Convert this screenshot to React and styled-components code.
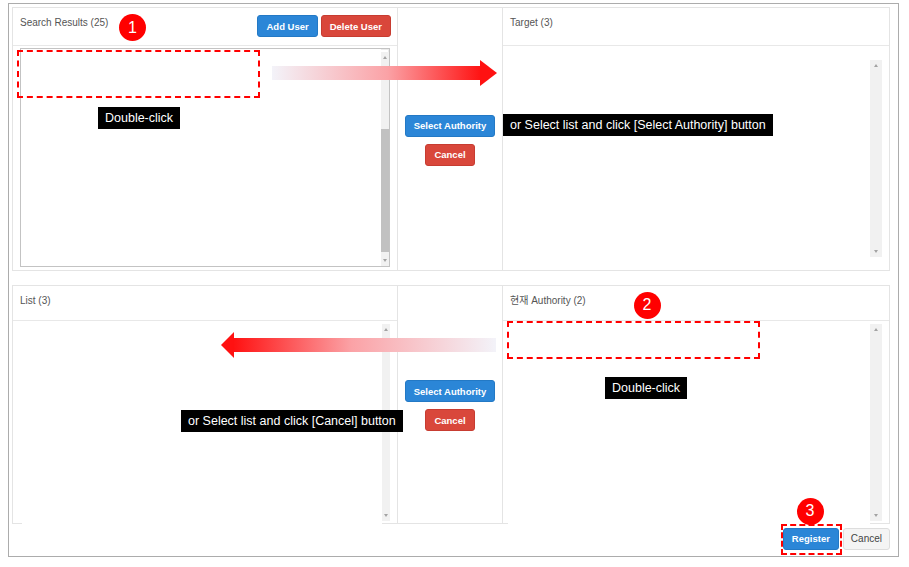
import React from 'react'
import styled, { createGlobalStyle } from 'styled-components'

const GlobalStyle = createGlobalStyle`
    html, body {
        margin: 0;
        padding: 0;
        background: #ffffff;
    }
    body {
        font-family: "Liberation Sans", "Noto Sans CJK KR", Arial, sans-serif;
    }
    * {
        box-sizing: border-box;
    }
`

const Page = styled.div`
    position: relative;
    width: 909px;
    height: 567px;
    overflow: hidden;
`

const Frame = styled.div`
    margin: 3px 0 0 8px;
    width: 891px;
    height: 554px;
    border: 1px solid #acacac;
    padding: 3px 8px 0 3px;
    display: flex;
    flex-direction: column;
`

const Section = styled.div`
    height: ${(props) => props.$height}px;
    margin-top: ${(props) => props.$top || 0}px;
    border: 1px solid #e4e4e4;
    display: grid;
    grid-template-columns: 385px 105px 1fr;
`

const Panel = styled.div`
    display: flex;
    flex-direction: column;
    min-height: 0;
    border-right: ${(props) => (props.$divider ? '1px solid #e4e4e4' : '0')};
`

const PanelHeader = styled.div`
    height: ${(props) => props.$height}px;
    flex-shrink: 0;
    border-bottom: 1px solid #e8e8e8;
    padding: 7px 6px 0 7px;
    display: flex;
    align-items: flex-start;
    justify-content: space-between;
`

const Title = styled.span`
    font-size: 10px;
    line-height: 14px;
    color: #555555;
    margin-top: 1px;
`

const ButtonRow = styled.div`
    display: flex;
    gap: 3px;
`

const COLORS = {
    primary: { bg: '#2b86d7', border: '#2379c5', text: '#ffffff' },
    danger: { bg: '#d9473b', border: '#c73c31', text: '#ffffff' },
    plain: { bg: '#f4f4f4', border: '#dddddd', text: '#444444' },
}

const Button = styled.button`
    height: 22px;
    padding: 0 ${(props) => (props.$variant === 'plain' ? 7 : 8)}px;
    border-radius: 3px;
    border: 1px solid ${(props) => COLORS[props.$variant].border};
    background: ${(props) => COLORS[props.$variant].bg};
    color: ${(props) => COLORS[props.$variant].text};
    font-family: "Liberation Sans", Arial, sans-serif;
    font-size: ${(props) => (props.$variant === 'plain' ? '10px' : '9.5px')};
    font-weight: ${(props) => (props.$variant === 'plain' ? 400 : 700)};
    white-space: nowrap;
    cursor: pointer;
    display: flex;
    align-items: center;
    justify-content: center;
`

const Middle = styled.div`
    display: flex;
    flex-direction: column;
    align-items: center;
    justify-content: center;
    gap: 7px;
    border-right: 1px solid #e4e4e4;
    padding-top: ${(props) => props.$shift || 0}px;
`

const BoxWrap = styled.div`
    flex: 1;
    min-height: 0;
    padding: 2px 7px 3px 7px;
    display: flex;
`

const ListBox = styled.div`
    flex: 1;
    display: flex;
    border: 1px solid #c3c3c3;
    box-shadow: inset 0 0 0 1px #ececec;
`

const ListArea = styled.div`
    flex: 1;
    min-height: 0;
    display: flex;
    padding: ${(props) => props.$pad};
`

const ListBody = styled.div`
    flex: 1;
    background: #ffffff;
    position: relative;
    z-index: 1;
    margin-bottom: ${(props) => props.$cover || 0}px;
`

const ScrollTrack = styled.div`
    position: relative;
    width: ${(props) => props.$w}px;
    margin: ${(props) => props.$m || 0};
    background: #f1f1f1;
    &::before,
    &::after {
        content: "";
        position: absolute;
        left: 50%;
        transform: translateX(-50%);
        border-left: 2.5px solid transparent;
        border-right: 2.5px solid transparent;
    }
    &::before {
        top: 4px;
        border-bottom: 3px solid #a3a3a3;
    }
    &::after {
        bottom: 4px;
        border-top: 3px solid #a3a3a3;
    }
`

const Thumb = styled.div`
    position: absolute;
    left: 0;
    right: 0;
    top: ${(props) => props.$top}px;
    height: ${(props) => props.$h}px;
    background: #c1c1c1;
`

const Footer = styled.div`
    flex: 1;
    display: flex;
    justify-content: flex-end;
    align-items: center;
    gap: 4px;
    padding: 0 0 3px 0;
`

/* annotation layer */

const Label = styled.div`
    position: absolute;
    left: ${(props) => props.$x}px;
    top: ${(props) => props.$y}px;
    height: 22px;
    padding: 0 7px;
    background: #000000;
    color: #ffffff;
    font-family: "Liberation Sans", Arial, sans-serif;
    font-size: 12.5px;
    display: flex;
    align-items: center;
    white-space: nowrap;
    z-index: 5;
`

const Badge = styled.div`
    position: absolute;
    left: ${(props) => props.$x - 13.5}px;
    top: ${(props) => props.$y - 13.5}px;
    width: 27px;
    height: 27px;
    border-radius: 50%;
    background: #ff0000;
    color: #ffffff;
    font-family: "Liberation Sans", Arial, sans-serif;
    font-size: 16px;
    display: flex;
    align-items: center;
    justify-content: center;
    z-index: 5;
`

const Marquee = styled.div`
    position: absolute;
    left: ${(props) => props.$x}px;
    top: ${(props) => props.$y}px;
    width: ${(props) => props.$w}px;
    height: ${(props) => props.$h}px;
    border: 2px dashed #ff0000;
    z-index: 5;
`

const ArrowSvg = styled.svg`
    position: absolute;
    left: ${(props) => props.$x}px;
    top: ${(props) => props.$y}px;
    z-index: 4;
`

const RightArrow = () => (
    <ArrowSvg $x={270} $y={58} width="230" height="30" viewBox="0 0 230 30">
        <defs>
            <linearGradient id="gr" x1="0" y1="0" x2="1" y2="0">
                <stop offset="0" stopColor="#f3f3f9" />
                <stop offset="0.55" stopColor="#fba2a6" />
                <stop offset="1" stopColor="#ff1111" />
            </linearGradient>
        </defs>
        <rect x="2" y="8" width="210" height="14" fill="url(#gr)" />
        <polygon points="210,2 227,15 210,28" fill="#ff1111" />
    </ArrowSvg>
)

const LeftArrow = () => (
    <ArrowSvg $x={219} $y={330} width="280" height="30" viewBox="0 0 280 30">
        <defs>
            <linearGradient id="gl" x1="0" y1="0" x2="1" y2="0">
                <stop offset="0" stopColor="#ff1111" />
                <stop offset="0.45" stopColor="#fba2a6" />
                <stop offset="1" stopColor="#f3f3f9" />
            </linearGradient>
        </defs>
        <rect x="14" y="8" width="263" height="14" fill="url(#gl)" />
        <polygon points="2,15 15,2 15,28" fill="#ff1111" />
    </ArrowSvg>
)

const App = () => {
    return (
        <Page>
            <GlobalStyle />
            <Frame>
                <Section $height={264}>
                    <Panel $divider>
                        <PanelHeader $height={38}>
                            <Title>Search Results (25)</Title>
                            <ButtonRow>
                                <Button $variant="primary">Add User</Button>
                                <Button $variant="danger">Delete User</Button>
                            </ButtonRow>
                        </PanelHeader>
                        <BoxWrap>
                            <ListBox>
                                <ListBody />
                                <ScrollTrack $w={8} $m="3px 0 0 0">
                                    <Thumb $top={77} $h={123} />
                                </ScrollTrack>
                            </ListBox>
                        </BoxWrap>
                    </Panel>
                    <Middle $shift={2}>
                        <Button $variant="primary">Select Authority</Button>
                        <Button $variant="danger">Cancel</Button>
                    </Middle>
                    <Panel>
                        <PanelHeader $height={38}>
                            <Title>Target (3)</Title>
                        </PanelHeader>
                        <ListArea $pad="14px 7px 13px 7px">
                            <ListBody />
                            <ScrollTrack $w={12} />
                        </ListArea>
                    </Panel>
                </Section>

                <Section $height={239} $top={14}>
                    <Panel $divider>
                        <PanelHeader $height={35}>
                            <Title>List (3)</Title>
                        </PanelHeader>
                        <ListArea $pad="3px 7px 2px 9px">
                            <ListBody $cover={-5} />
                            <ScrollTrack $w={8} />
                        </ListArea>
                    </Panel>
                    <Middle $shift={2}>
                        <Button $variant="primary">Select Authority</Button>
                        <Button $variant="danger">Cancel</Button>
                    </Middle>
                    <Panel>
                        <PanelHeader $height={35}>
                            <Title>현재 Authority (2)</Title>
                        </PanelHeader>
                        <ListArea $pad="3px 7px 2px 5px">
                            <ListBody $cover={-5} />
                            <ScrollTrack $w={12} />
                        </ListArea>
                    </Panel>
                </Section>

                <Footer>
                    <Button $variant="primary">Register</Button>
                    <Button $variant="plain">Cancel</Button>
                </Footer>
            </Frame>

            <RightArrow />
            <LeftArrow />

            <Badge $x={132.5} $y={27.5}>1</Badge>
            <Badge $x={647} $y={305}>2</Badge>
            <Badge $x={810} $y={511}>3</Badge>

            <Marquee $x={17} $y={50} $w={243} $h={48} />
            <Marquee $x={507} $y={321} $w={253} $h={38} />
            <Marquee $x={781} $y={524} $w={61} $h={31} />

            <Label $x={98} $y={107}>Double-click</Label>
            <Label $x={605} $y={377}>Double-click</Label>
            <Label $x={503} $y={114}>or Select list and click [Select Authority] button</Label>
            <Label $x={181} $y={410}>or Select list and click [Cancel] button</Label>
        </Page>
    )
}

export default App
